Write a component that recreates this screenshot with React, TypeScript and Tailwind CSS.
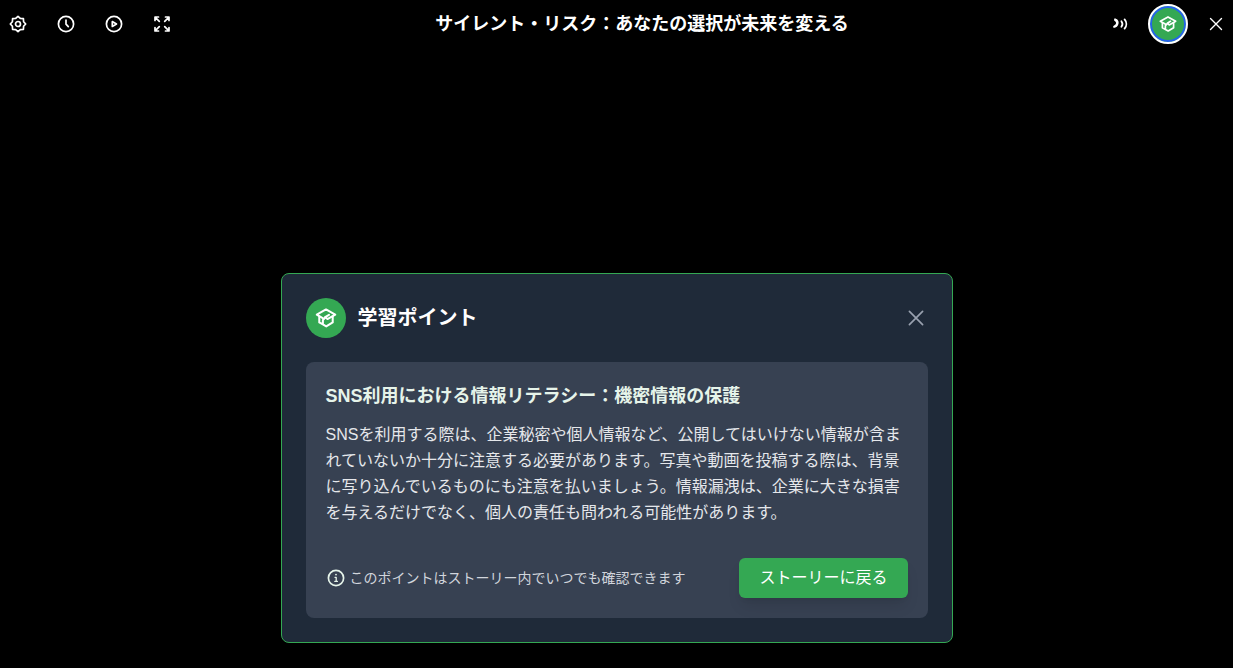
import type { ReactNode } from 'react'

const lessonTitle = 'SNS利用における情報リテラシー：機密情報の保護'
const lessonBody =
  'SNSを利用する際は、企業秘密や個人情報など、公開してはいけない情報が含まれていないか十分に注意する必要があります。写真や動画を投稿する際は、背景に写り込んでいるものにも注意を払いましょう。情報漏洩は、企業に大きな損害を与えるだけでなく、個人の責任も問われる可能性があります。'

interface IconProps {
  className?: string
  children: ReactNode
}

function Icon({ className = 'size-5', children }: IconProps) {
  return (
    <svg
      viewBox="0 0 20 20"
      className={className}
      fill="none"
      stroke="currentColor"
      strokeWidth="1.7"
      strokeLinecap="round"
      strokeLinejoin="round"
      aria-hidden="true"
    >
      {children}
    </svg>
  )
}

function GearIcon() {
  return (
    <Icon>
      <path d="M10 2.300 12.300 4.400 15.400 4.600 15.600 7.700 17.700 10 15.600 12.300 15.400 15.400 12.300 15.600 10 17.700 7.700 15.600 4.600 15.400 4.400 12.300 2.300 10 4.400 7.700 4.600 4.600 7.700 4.400Z" />
      <circle cx="10" cy="10" r="2.500" />
    </Icon>
  )
}

function ClockIcon() {
  return (
    <Icon>
      <circle cx="10" cy="10" r="7.6" />
      <path d="M10 6v4.200l2.300 2.400" />
    </Icon>
  )
}

function PlayIcon() {
  return (
    <Icon>
      <circle cx="10" cy="10" r="7.6" />
      <path d="M8.300 7.600v4.800l4.200-2.400Z" />
    </Icon>
  )
}

function ExpandIcon() {
  return (
    <Icon>
      <path d="M3 6.500V3h3.500M3.300 3.300l4 4M13.500 3H17v3.500M16.700 3.300l-4 4M3 13.500V17h3.500M3.300 16.700l4-4M13.500 17H17v-3.500M16.700 16.700l-4-4" />
    </Icon>
  )
}

function VoiceIcon() {
  return (
    <Icon>
      <path
        d="M4.300 4.400c2.700-.2 4.700 2.100 4.300 4.900-.4 2.900-2.500 4.600-5 4.700l-.5-1.800 2.300-1.600c.7-.8.800-1.700.4-2.600L4 6.300Z"
        fill="currentColor"
        stroke="none"
      />
      <path d="M11.400 7.200c1.300 1.700 1.300 3.900 0 5.600M14.600 5.400c2.300 2.700 2.300 6.500 0 9.200" strokeWidth="1.800" />
    </Icon>
  )
}

function LearnIcon({ className }: { className?: string }) {
  return (
    <Icon className={className}>
      <path d="M7.600 10.300 2.300 7.200 10 2.900l7.700 4.300-6.500 3.700-1.900-1.700 3.200-1.900" />
      <path d="M4.400 8.800v4.900l3 1.700v-3.600l2-2.200M7.400 15.400 10.200 17l5.400-3.300V8.800" />
    </Icon>
  )
}

function CloseIcon({ className }: { className?: string }) {
  return (
    <Icon className={className}>
      <path d="m4.500 4.500 11 11M15.500 4.500l-11 11" strokeWidth="1.400" />
    </Icon>
  )
}

function InfoIcon() {
  return (
    <Icon className="size-5 shrink-0 text-[#e6f4ea]">
      <circle cx="10" cy="10" r="7.600" />
      <path d="M9 9.300h1.200v4M8.800 13.400h2.600" strokeWidth="1.300" />
      <circle cx="10" cy="6.600" r=".9" fill="currentColor" stroke="none" />
    </Icon>
  )
}

interface ToolButtonProps {
  label: string
  children: ReactNode
}

function ToolButton({ label, children }: ToolButtonProps) {
  return (
    <button type="button" aria-label={label} className="flex h-9 w-8 items-center justify-center">
      {children}
    </button>
  )
}

function Header() {
  return (
    <header className="flex h-12 items-center justify-between pr-px">
      <div className="flex items-center gap-4 px-0.5">
        <ToolButton label="設定"><GearIcon /></ToolButton>
        <ToolButton label="履歴"><ClockIcon /></ToolButton>
        <ToolButton label="再生"><PlayIcon /></ToolButton>
        <ToolButton label="全画面"><ExpandIcon /></ToolButton>
      </div>
      <h1 className="text-lg leading-6 font-semibold">サイレント・リスク：あなたの選択が未来を変える</h1>
      <div className="flex items-center gap-3">
        <ToolButton label="音声"><VoiceIcon /></ToolButton>
        <button
          type="button"
          aria-label="学習ポイント"
          className="flex size-10 items-center justify-center rounded-full border-2 border-white bg-[#34a853] ring-2 ring-[#2563eb] ring-inset"
        >
          <LearnIcon />
        </button>
        <ToolButton label="閉じる"><CloseIcon /></ToolButton>
      </div>
    </header>
  )
}

function LessonDialog() {
  return (
    <section
      role="dialog"
      aria-labelledby="lesson-heading"
      className="w-full max-w-2xl rounded-lg border border-[#34a853] bg-[#1f2a39] p-6"
    >
      <div className="mb-6 flex items-center">
        <span className="mr-3 flex size-10 items-center justify-center rounded-full bg-[#34a853]">
          <LearnIcon className="size-6" />
        </span>
        <h2 id="lesson-heading" className="flex-1 text-xl font-semibold">学習ポイント</h2>
        <button type="button" aria-label="学習ポイントを閉じる" className="flex size-6 items-center justify-center text-gray-400">
          <CloseIcon className="size-6" />
        </button>
      </div>
      <div className="rounded-lg bg-[#374152] p-5">
        <h3 className="mb-3 text-lg leading-7 font-semibold text-[#e6f4ea]">{lessonTitle}</h3>
        <p className="leading-[26px] text-gray-200">{lessonBody}</p>
        <div className="mt-8 flex items-center justify-between">
          <p className="flex items-center gap-1 text-sm text-gray-300">
            <InfoIcon />
            このポイントはストーリー内でいつでも確認できます
          </p>
          <button type="button" className="h-10 rounded-md bg-[#34a853] px-5 shadow-lg">ストーリーに戻る</button>
        </div>
      </div>
    </section>
  )
}

export default function App() {
  return (
    <div className="flex min-h-screen flex-col bg-black font-['Liberation_Sans','Noto_Sans_CJK_JP',sans-serif] text-white" lang="ja">
      <Header />
      <main className="flex flex-1 items-end justify-center px-6 pb-[25px]">
        <LessonDialog />
      </main>
    </div>
  )
}
